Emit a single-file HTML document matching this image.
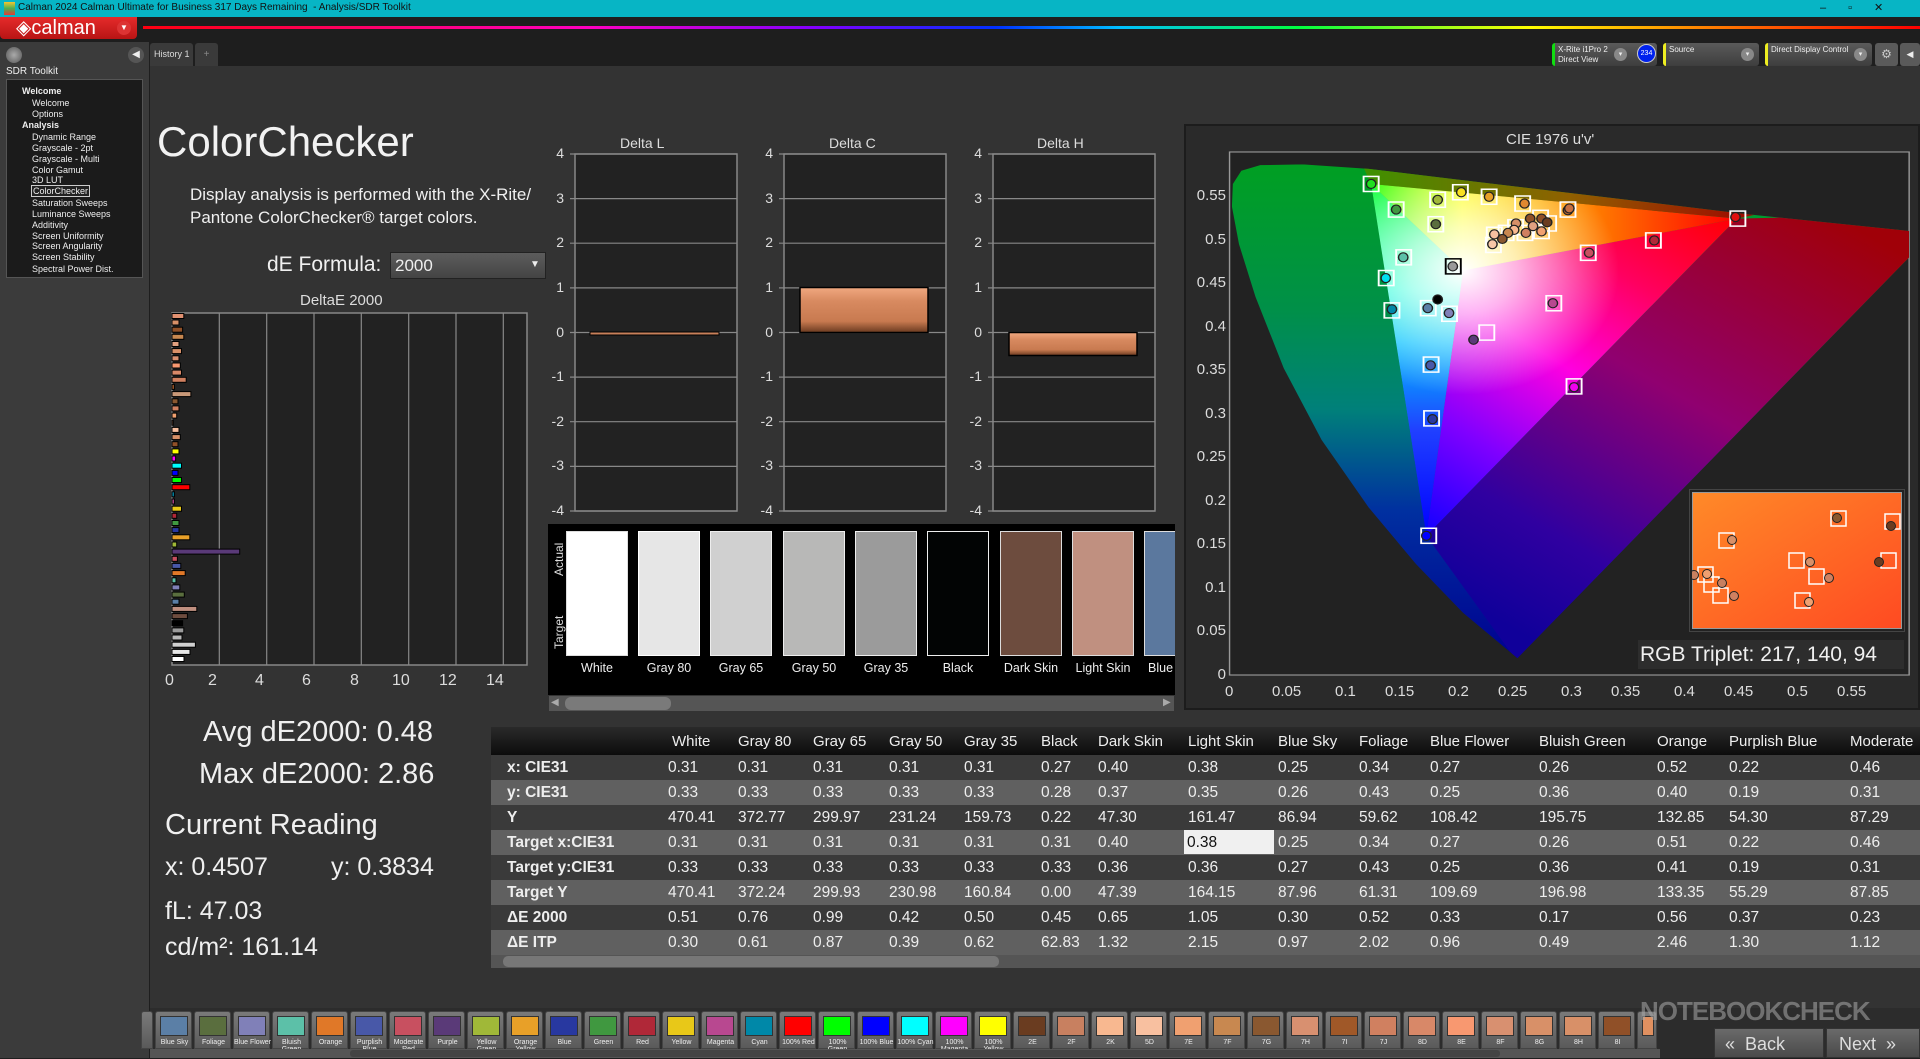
<!DOCTYPE html>
<html><head><meta charset="utf-8">
<style>
*{margin:0;padding:0;box-sizing:border-box}
body{width:1920px;height:1058px;background:#1e1e1e;font-family:"Liberation Sans",sans-serif;color:#eee;position:relative;overflow:hidden}
.a{position:absolute;white-space:nowrap}
.tree div{position:absolute;font-size:9px;color:#eee;white-space:nowrap}
.tk{position:absolute;font-size:14px;color:#ddd;text-align:right;width:24px}
.row{position:absolute;left:491px;width:1429px;height:25px;font-size:15.5px;line-height:25px;color:#eee}
.row span{position:absolute;top:0;white-space:nowrap}
.row b{position:absolute;left:16px;font-weight:bold}
.tab{position:absolute;top:1011px;width:37px;height:38px;background:linear-gradient(#7a7a7a,#5a5a5a);border:1px solid #444;border-radius:3px 3px 0 0}
.tab i{position:absolute;left:4px;top:4px;width:28px;height:20px;border:1px solid #333}
.tab em{position:absolute;left:0;top:27px;width:37px;font-size:7px;line-height:7px;text-align:center;color:#eee;font-style:normal}
</style></head><body>
<div class="a" style="left:0;top:0;width:1920px;height:17px;background:#07b5c5"></div>
<div class="a" style="left:4px;top:2px;width:11px;height:13px;background:linear-gradient(#f4c430,#4caf50 50%,#e53935)"></div>
<div class="a" style="left:18px;top:2px;font-size:10px;color:#111">Calman 2024 Calman Ultimate for Business 317 Days Remaining &nbsp;- Analysis/SDR Toolkit</div>
<div class="a" style="left:1820px;top:1px;font-size:11px;color:#111;letter-spacing:22px">–▫✕</div>
<div class="a" style="left:0;top:17px;width:137px;height:22px;background:linear-gradient(#e52b2b,#b81414);border-radius:0 0 4px 4px"></div>
<div class="a" style="left:16px;top:17px;font-size:20px;color:#fff;line-height:22px">◈calman</div>
<div class="a" style="left:117px;top:21px;width:14px;height:14px;border-radius:7px;background:#d33;font-size:8px;color:#fff;text-align:center;line-height:14px">▼</div>
<div class="a" style="left:143px;top:26px;width:1777px;height:3px;background:linear-gradient(90deg,#ff0010,#ff00c0 25%,#8000ff 38%,#0030ff 48%,#00c0ff 55%,#00ff40 65%,#ffff00 78%,#ff8000 88%,#ff0000)"></div>
<div class="a" style="left:0;top:42px;width:149px;height:1016px;background:#3b3b3b"></div>
<div class="a" style="left:6px;top:47px;width:16px;height:16px;border-radius:8px;background:radial-gradient(#aaa,#555)"></div>
<div class="a" style="left:128px;top:47px;width:16px;height:16px;border-radius:8px;background:#555;font-size:10px;text-align:center;line-height:16px">◀</div>
<div class="a" style="left:6px;top:66px;font-size:10px;color:#eee">SDR Toolkit</div>
<div class="a tree" style="left:6px;top:79px;width:137px;height:199px;background:#1b1b1b;border:1px solid #555">
<div style="left:15px;top:6px;font-weight:bold">Welcome</div>
<div style="left:25px;top:18px">Welcome</div>
<div style="left:25px;top:29px">Options</div>
<div style="left:15px;top:40px;font-weight:bold">Analysis</div>
<div style="left:25px;top:52px">Dynamic Range</div>
<div style="left:25px;top:63px">Grayscale - 2pt</div>
<div style="left:25px;top:74px">Grayscale - Multi</div>
<div style="left:25px;top:85px">Color Gamut</div>
<div style="left:25px;top:95px">3D LUT</div>
<div style="left:24px;top:105px;border:1px solid #ccc;background:#222;padding:0 1px">ColorChecker</div>
<div style="left:25px;top:118px">Saturation Sweeps</div>
<div style="left:25px;top:129px">Luminance Sweeps</div>
<div style="left:25px;top:140px">Additivity</div>
<div style="left:25px;top:151px">Screen Uniformity</div>
<div style="left:25px;top:161px">Screen Angularity</div>
<div style="left:25px;top:172px">Screen Stability</div>
<div style="left:25px;top:184px">Spectral Power Dist.</div>
</div>
<div class="a" style="left:150px;top:43px;width:43px;height:23px;background:#3a3a3a;border-radius:3px 3px 0 0;font-size:9px;line-height:23px;padding-left:4px;color:#ddd">History 1</div>
<div class="a" style="left:195px;top:43px;width:23px;height:23px;background:#3a3a3a;border-radius:3px 3px 0 0;font-size:10px;line-height:23px;text-align:center;color:#888">+</div>
<div class="a" style="left:1552px;top:43px;width:105px;height:23px;background:linear-gradient(#5a5a5a,#3e3e3e);border-left:3px solid #1d1;border-radius:3px;font-size:8px;line-height:10px;padding:2px 3px;color:#eee">X-Rite i1Pro 2<br>Direct View</div>
<div class="a" style="left:1614px;top:48px;width:13px;height:13px;border-radius:7px;background:#888;font-size:7px;text-align:center;line-height:13px;color:#eee">▾</div>
<div class="a" style="left:1637px;top:44px;width:19px;height:19px;border-radius:10px;background:#0022ee;border:1px solid #ccc;font-size:7px;text-align:center;line-height:17px;color:#fff">234</div>
<div class="a" style="left:1663px;top:43px;width:96px;height:23px;background:linear-gradient(#5a5a5a,#3e3e3e);border-left:3px solid #ee2;border-radius:3px;font-size:8px;padding:2px 3px;color:#eee">Source</div>
<div class="a" style="left:1741px;top:48px;width:13px;height:13px;border-radius:7px;background:#888;font-size:7px;text-align:center;line-height:13px">▾</div>
<div class="a" style="left:1765px;top:43px;width:107px;height:23px;background:linear-gradient(#5a5a5a,#3e3e3e);border-left:3px solid #ee2;border-radius:3px;font-size:8px;padding:2px 3px;color:#eee">Direct Display Control</div>
<div class="a" style="left:1854px;top:48px;width:13px;height:13px;border-radius:7px;background:#888;font-size:7px;text-align:center;line-height:13px">▾</div>
<div class="a" style="left:1875px;top:43px;width:23px;height:23px;background:#5a5a5a;border-radius:3px;font-size:12px;text-align:center;line-height:23px;color:#ccc">⚙</div>
<div class="a" style="left:1900px;top:43px;width:20px;height:23px;background:#5a5a5a;border-radius:3px;font-size:9px;text-align:center;line-height:23px">◀</div>
<div class="a" style="left:150px;top:66px;width:1770px;height:992px;background:#333"></div>
<div class="a" style="left:157px;top:118px;font-size:42px;color:#f2f2f2">ColorChecker</div>
<div class="a" style="left:190px;top:183px;font-size:17px;line-height:23px;color:#f0f0f0">Display analysis is performed with the X-Rite/<br>Pantone ColorChecker® target colors.</div>
<div class="a" style="left:267px;top:253px;font-size:21px;color:#f0f0f0">dE Formula:</div>
<div class="a" style="left:390px;top:252px;width:156px;height:27px;background:linear-gradient(#5c5c5c,#444);border:1px solid #222;font-size:17px;line-height:25px;padding-left:4px;color:#eee">2000</div>
<div class="a" style="left:530px;top:259px;font-size:10px;color:#eee">▼</div>
<div class="a" style="left:300px;top:292px;font-size:15px;color:#ddd">DeltaE 2000</div>
<svg class="a" style="left:150px;top:290px" width="400" height="410">
<rect x="22" y="23" width="355" height="352" fill="#222" stroke="#888" stroke-width="1.5"/>
<g stroke="#888" stroke-width="1.2"><line x1="69.3" y1="23" x2="69.3" y2="375"/><line x1="116.7" y1="23" x2="116.7" y2="375"/><line x1="164" y1="23" x2="164" y2="375"/><line x1="211.3" y1="23" x2="211.3" y2="375"/><line x1="258.7" y1="23" x2="258.7" y2="375"/><line x1="306" y1="23" x2="306" y2="375"/><line x1="353.3" y1="23" x2="353.3" y2="375"/></g>
<g stroke="#000" stroke-width="1">
<rect x="22" y="366.5" width="12" height="5" fill="#fff"/>
<rect x="22" y="359.4" width="18" height="5" fill="#e6e6e6"/>
<rect x="22" y="352.2" width="23.4" height="5" fill="#d0d0d0"/>
<rect x="22" y="345" width="10" height="5" fill="#b8b8b8"/>
<rect x="22" y="337.9" width="11.8" height="5" fill="#9b9b9b"/>
<rect x="22" y="330.7" width="10.6" height="5" fill="#000"/>
<rect x="22" y="323.6" width="15.4" height="5" fill="#6d4c3e"/>
<rect x="22" y="316.4" width="24.8" height="5" fill="#c09080"/>
<rect x="22" y="309.2" width="7" height="5" fill="#5b7fa6"/>
<rect x="22" y="302.1" width="12.3" height="5" fill="#5a6e3e"/>
<rect x="22" y="294.9" width="7.8" height="5" fill="#8080b8"/>
<rect x="22" y="287.8" width="4" height="5" fill="#5cc0a8"/>
<rect x="22" y="280.6" width="13.2" height="5" fill="#e07828"/>
<rect x="22" y="273.4" width="8.8" height="5" fill="#4858a8"/>
<rect x="22" y="266.3" width="5.4" height="5" fill="#c85060"/>
<rect x="22" y="259.1" width="67.7" height="5" fill="#5a3a78"/>
<rect x="22" y="252" width="4.7" height="5" fill="#a0b838"/>
<rect x="22" y="244.8" width="17.8" height="5" fill="#e8a028"/>
<rect x="22" y="237.6" width="7" height="5" fill="#2838a0"/>
<rect x="22" y="230.5" width="7" height="5" fill="#409840"/>
<rect x="22" y="223.3" width="4.7" height="5" fill="#b02838"/>
<rect x="22" y="216.2" width="9.5" height="5" fill="#e8c818"/>
<rect x="22" y="209" width="2.4" height="5" fill="#b84890"/>
<rect x="22" y="201.8" width="2.4" height="5" fill="#0088a8"/>
<rect x="22" y="194.7" width="17.8" height="5" fill="#f00"/>
<rect x="22" y="187.5" width="9.5" height="5" fill="#0f0"/>
<rect x="22" y="180.4" width="6" height="5" fill="#00f"/>
<rect x="22" y="173.2" width="9.5" height="5" fill="#0ff"/>
<rect x="22" y="166" width="3.6" height="5" fill="#f0f"/>
<rect x="22" y="158.9" width="7" height="5" fill="#ff0"/>
<rect x="22" y="151.7" width="6" height="5" fill="#905028"/>
<rect x="22" y="144.6" width="8.3" height="5" fill="#d89068"/>
<rect x="22" y="137.4" width="7" height="5" fill="#f8c0a0"/>
<rect x="22" y="130.2" width="1.2" height="5" fill="#d89068"/>
<rect x="22" y="123.1" width="4.7" height="5" fill="#f0a070"/>
<rect x="22" y="115.9" width="7" height="5" fill="#d08060"/>
<rect x="22" y="108.8" width="6" height="5" fill="#8a5830"/>
<rect x="22" y="101.6" width="18.9" height="5" fill="#c89878"/>
<rect x="22" y="94.4" width="2.4" height="5" fill="#a05828"/>
<rect x="22" y="87.3" width="14.2" height="5" fill="#d08060"/>
<rect x="22" y="80.1" width="9.5" height="5" fill="#d88868"/>
<rect x="22" y="73" width="8.3" height="5" fill="#f89870"/>
<rect x="22" y="65.8" width="7" height="5" fill="#d89070"/>
<rect x="22" y="58.6" width="9.5" height="5" fill="#d89068"/>
<rect x="22" y="51.5" width="7" height="5" fill="#e0a080"/>
<rect x="22" y="44.3" width="11.8" height="5" fill="#c88850"/>
<rect x="22" y="37.2" width="10.6" height="5" fill="#905028"/>
<rect x="22" y="30" width="7" height="5" fill="#d89068"/>
<rect x="22" y="23.5" width="11.8" height="5" fill="#e09070"/>
</g>
</svg>
<div class="a" style="left:165px;top:672px;width:380px;font-size:16px;color:#ddd">
<span class="a" style="left:0">0</span><span class="a" style="left:43px">2</span><span class="a" style="left:90px">4</span><span class="a" style="left:137px">6</span><span class="a" style="left:185px">8</span><span class="a" style="left:227px">10</span><span class="a" style="left:274px">12</span><span class="a" style="left:321px">14</span></div>
<div class="a" style="left:203px;top:716px;font-size:29px;color:#f0f0f0">Avg dE2000: 0.48</div>
<div class="a" style="left:199px;top:758px;font-size:29px;color:#f0f0f0">Max dE2000: 2.86</div>
<div class="a" style="left:165px;top:809px;font-size:29px;color:#f0f0f0">Current Reading</div>
<div class="a" style="left:165px;top:853px;font-size:25px;color:#f0f0f0">x: 0.4507</div>
<div class="a" style="left:331px;top:853px;font-size:25px;color:#f0f0f0">y: 0.3834</div>
<div class="a" style="left:165px;top:897px;font-size:25px;color:#f0f0f0">fL: 47.03</div>
<div class="a" style="left:165px;top:933px;font-size:25px;color:#f0f0f0">cd/m²: 161.14</div>
<svg class="a" style="left:540px;top:130px" width="640" height="400">
<g fill="#222" stroke="#888" stroke-width="1.5"><rect x="35" y="24" width="162" height="357"/><rect x="244" y="24" width="162" height="357"/><rect x="453" y="24" width="162" height="357"/></g>
<g stroke="#888" stroke-width="1.2">
<path d="M30 24H197M30 68.6H197M30 113.2H197M30 157.9H197M30 202.5H197M30 247.1H197M30 291.7H197M30 336.4H197M30 381H197"/>
<path d="M239 24H406M239 68.6H406M239 113.2H406M239 157.9H406M239 202.5H406M239 247.1H406M239 291.7H406M239 336.4H406M239 381H406"/>
<path d="M448 24H615M448 68.6H615M448 113.2H615M448 157.9H615M448 202.5H615M448 247.1H615M448 291.7H615M448 336.4H615M448 381H615"/>
</g>
<defs><linearGradient id="bar" x1="0" y1="0" x2="0" y2="1"><stop offset="0" stop-color="#f0a880"/><stop offset=".3" stop-color="#d88a60"/><stop offset=".75" stop-color="#c87a50"/><stop offset="1" stop-color="#6a3a20"/></linearGradient></defs>
<rect x="50" y="202" width="129" height="3" fill="#c8805a" stroke="#000"/>
<rect x="260" y="157.5" width="128" height="45" fill="url(#bar)" stroke="#000" stroke-width="1.5"/>
<rect x="469" y="202.5" width="128" height="23" fill="url(#bar)" stroke="#000" stroke-width="1.5"/>
</svg>
<div class="a" style="left:620px;top:135px;font-size:14px;color:#ddd">Delta L</div>
<div class="a" style="left:829px;top:135px;font-size:14px;color:#ddd">Delta C</div>
<div class="a" style="left:1037px;top:135px;font-size:14px;color:#ddd">Delta H</div>
<div class="a" style="left:540px;top:145px;width:30px;height:400px;font-size:14px;color:#ddd">
<div class="tk" style="top:0">4</div><div class="tk" style="top:44.6px">3</div><div class="tk" style="top:89.2px">2</div><div class="tk" style="top:133.9px">1</div><div class="tk" style="top:178.5px">0</div><div class="tk" style="top:223px">-1</div><div class="tk" style="top:267.7px">-2</div><div class="tk" style="top:312.4px">-3</div><div class="tk" style="top:357px">-4</div></div>
<div class="a" style="left:749px;top:145px;width:30px;height:400px">
<div class="tk" style="top:0">4</div><div class="tk" style="top:44.6px">3</div><div class="tk" style="top:89.2px">2</div><div class="tk" style="top:133.9px">1</div><div class="tk" style="top:178.5px">0</div><div class="tk" style="top:223px">-1</div><div class="tk" style="top:267.7px">-2</div><div class="tk" style="top:312.4px">-3</div><div class="tk" style="top:357px">-4</div></div>
<div class="a" style="left:958px;top:145px;width:30px;height:400px">
<div class="tk" style="top:0">4</div><div class="tk" style="top:44.6px">3</div><div class="tk" style="top:89.2px">2</div><div class="tk" style="top:133.9px">1</div><div class="tk" style="top:178.5px">0</div><div class="tk" style="top:223px">-1</div><div class="tk" style="top:267.7px">-2</div><div class="tk" style="top:312.4px">-3</div><div class="tk" style="top:357px">-4</div></div>
<div class="a" style="left:548px;top:524px;width:627px;height:188px;background:#000;overflow:hidden">
<div class="a" style="font-size:12px;color:#ddd;transform:rotate(-90deg);transform-origin:left top;top:52px;left:4px">Actual</div>
<div class="a" style="left:4px;top:125px;font-size:12px;color:#ddd;transform:rotate(-90deg);transform-origin:left top">Target</div>
<div class="a" style="left:18px;top:7px;width:62px;height:125px;background:#fff;border:1px solid #ddd"></div>
<div class="a" style="left:90px;top:7px;width:62px;height:125px;background:#e6e6e6;border:1px solid #fff"></div>
<div class="a" style="left:162px;top:7px;width:62px;height:125px;background:#d0d0d0;border:1px solid #eee"></div>
<div class="a" style="left:235px;top:7px;width:62px;height:125px;background:#b8b8b7;border:1px solid #eee"></div>
<div class="a" style="left:307px;top:7px;width:62px;height:125px;background:#9b9b9b;border:1px solid #eee"></div>
<div class="a" style="left:379px;top:7px;width:62px;height:125px;background:#020404;border:1px solid #eee"></div>
<div class="a" style="left:452px;top:7px;width:62px;height:125px;background:#6d4c3e;border:1px solid #ddd"></div>
<div class="a" style="left:524px;top:7px;width:62px;height:125px;background:#c09080;border:1px solid #ddd"></div>
<div class="a" style="left:596px;top:7px;width:62px;height:125px;background:#5b789e;border:1px solid #ddd"></div>
<div class="a" style="left:18px;top:137px;width:62px;text-align:center;font-size:12.5px;color:#eee">White</div>
<div class="a" style="left:90px;top:137px;width:62px;text-align:center;font-size:12.5px;color:#eee">Gray 80</div>
<div class="a" style="left:162px;top:137px;width:62px;text-align:center;font-size:12.5px;color:#eee">Gray 65</div>
<div class="a" style="left:235px;top:137px;width:62px;text-align:center;font-size:12.5px;color:#eee">Gray 50</div>
<div class="a" style="left:307px;top:137px;width:62px;text-align:center;font-size:12.5px;color:#eee">Gray 35</div>
<div class="a" style="left:379px;top:137px;width:62px;text-align:center;font-size:12.5px;color:#eee">Black</div>
<div class="a" style="left:452px;top:137px;width:62px;text-align:center;font-size:12.5px;color:#eee">Dark Skin</div>
<div class="a" style="left:524px;top:137px;width:62px;text-align:center;font-size:12.5px;color:#eee">Light Skin</div>
<div class="a" style="left:600px;top:137px;font-size:12.5px;color:#eee">Blue Sky</div>
</div>
<div class="a" style="left:548px;top:695px;width:627px;height:17px;background:#555;border:1px solid #333"></div>
<div class="a" style="left:565px;top:697px;width:106px;height:13px;background:#7a7a7a;border-radius:6px"></div>
<div class="a" style="left:551px;top:697px;font-size:10px;color:#aaa">◀</div>
<div class="a" style="left:1163px;top:697px;font-size:10px;color:#aaa">▶</div>
<div class="a" style="left:1184px;top:124px;width:736px;height:586px;background:#2a2a2a;border:2px solid #1c1c1c"></div>
<div class="a" style="left:1506px;top:131px;font-size:15px;color:#ddd">CIE 1976 u'v'</div>
<svg class="a" style="left:1180px;top:120px" width="740" height="590" viewBox="0 0 1568 1568" preserveAspectRatio="none">
<defs>
<clipPath id="loc"><polygon points="715,1430 600,1310 500,1180 400,1030 300,850 220,660 160,470 125,330 110,230 112,170 130,135 170,120 260,118 400,130 600,160 900,205 1200,250 1545,295 1545,365"/></clipPath>
<linearGradient id="gl" x1="0" y1="0" x2="0" y2="1"><stop offset="0" stop-color="#00a020"/><stop offset=".3" stop-color="#009048"/><stop offset=".5" stop-color="#00807a"/><stop offset=".7" stop-color="#0030a0"/><stop offset="1" stop-color="#000090"/></linearGradient>
<linearGradient id="gr" gradientUnits="userSpaceOnUse" x1="1450" y1="300" x2="700" y2="1350"><stop offset="0" stop-color="#a00008"/><stop offset=".45" stop-color="#900070"/><stop offset=".8" stop-color="#3000a0"/><stop offset="1" stop-color="#10009a"/></linearGradient>
<linearGradient id="gt" gradientUnits="userSpaceOnUse" x1="400" y1="0" x2="1250" y2="0"><stop offset="0" stop-color="#409000"/><stop offset=".5" stop-color="#906000"/><stop offset="1" stop-color="#a00000"/></linearGradient>
<linearGradient id="s1" gradientUnits="userSpaceOnUse" x1="0" y1="170" x2="0" y2="1105"><stop offset="0" stop-color="#00ff20"/><stop offset=".3" stop-color="#00ffd0"/><stop offset=".45" stop-color="#00c0ff"/><stop offset=".7" stop-color="#2040ff"/><stop offset="1" stop-color="#0000ff"/></linearGradient>
<linearGradient id="s2" gradientUnits="userSpaceOnUse" x1="522" y1="1105" x2="1180" y2="262"><stop offset="0" stop-color="#1000ff"/><stop offset=".25" stop-color="#8000ff"/><stop offset=".5" stop-color="#ff00e0"/><stop offset=".75" stop-color="#ff0060"/><stop offset="1" stop-color="#ff0000"/></linearGradient>
<linearGradient id="s3" gradientUnits="userSpaceOnUse" x1="405" y1="0" x2="1180" y2="0"><stop offset="0" stop-color="#20ff00"/><stop offset=".25" stop-color="#ffff00"/><stop offset=".5" stop-color="#ffa000"/><stop offset="1" stop-color="#ff0000"/></linearGradient>
<radialGradient id="wh" gradientUnits="userSpaceOnUse" cx="600" cy="400" r="330"><stop offset="0" stop-color="#fff" stop-opacity="1"/><stop offset=".35" stop-color="#fff" stop-opacity=".7"/><stop offset="1" stop-color="#fff" stop-opacity="0"/></radialGradient>
<clipPath id="tri"><polygon points="1180,262 405,170 522,1105"/></clipPath>
</defs>
<rect x="105" y="85" width="1440" height="1390" fill="#222" stroke="#999" stroke-width="3"/>
<g clip-path="url(#loc)">
<rect x="100" y="100" width="1460" height="1340" fill="url(#gl)"/>
<polygon points="1180,262 1600,250 1600,400 715,1440 522,1105" fill="url(#gr)"/>
<polygon points="380,100 1300,230 1180,262 405,172" fill="url(#gt)"/>
</g>
<g clip-path="url(#tri)">
<polygon points="600,400 405,170 522,1105" fill="url(#s1)"/>
<polygon points="600,400 522,1105 1180,262" fill="url(#s2)"/>
<polygon points="600,400 1180,262 405,170" fill="url(#s3)"/>
<rect x="300" y="100" width="1000" height="1100" fill="url(#wh)"/>
</g>
<g stroke="#fff" stroke-width="4" fill="none">
<rect x="389" y="150" width="32" height="40"/><rect x="442" y="218" width="32" height="40"/><rect x="530" y="192" width="32" height="40"/>
<rect x="526" y="257" width="32" height="40"/><rect x="578" y="172" width="32" height="40"/><rect x="639" y="184" width="32" height="40"/>
<rect x="710" y="202" width="32" height="40"/><rect x="806" y="218" width="32" height="40"/><rect x="1166" y="242" width="32" height="40"/>
<rect x="987" y="300" width="32" height="40"/><rect x="849" y="333" width="32" height="40"/><rect x="458" y="345" width="32" height="40"/>
<rect x="421" y="400" width="32" height="40"/><rect x="433" y="486" width="32" height="40"/><rect x="510" y="480" width="32" height="40"/>
<rect x="555" y="495" width="32" height="40"/><rect x="776" y="467" width="32" height="40"/><rect x="634" y="545" width="32" height="40"/>
<rect x="516" y="630" width="32" height="40"/><rect x="517" y="773" width="32" height="40"/><rect x="819" y="688" width="32" height="40"/>
<rect x="511" y="1085" width="32" height="40"/><rect x="748" y="240" width="32" height="40"/><rect x="765" y="255" width="32" height="40"/>
<rect x="650" y="285" width="32" height="40"/><rect x="648" y="312" width="32" height="40"/><rect x="675" y="280" width="32" height="40"/>
<rect x="695" y="265" width="32" height="40"/><rect x="715" y="280" width="32" height="40"/><rect x="750" y="275" width="32" height="40"/>
</g>
<rect x="563" y="369" width="32" height="40" fill="none" stroke="#000" stroke-width="4"/>
<g stroke="#222" stroke-width="3">
<ellipse cx="405" cy="170" rx="10" ry="12" fill="#20e020"/><ellipse cx="458" cy="238" rx="10" ry="12" fill="#409840"/><ellipse cx="546" cy="212" rx="10" ry="12" fill="#a0b838"/>
<ellipse cx="542" cy="277" rx="10" ry="12" fill="#5a6e3e"/><ellipse cx="596" cy="192" rx="10" ry="12" fill="#f8e020"/><ellipse cx="655" cy="204" rx="10" ry="12" fill="#e8a028"/>
<ellipse cx="730" cy="222" rx="10" ry="12" fill="#e08830"/><ellipse cx="822" cy="240" rx="10" ry="12" fill="#b06030"/><ellipse cx="1177" cy="258" rx="10" ry="12" fill="#e01010"/>
<ellipse cx="1005" cy="320" rx="10" ry="12" fill="#b02838"/><ellipse cx="867" cy="353" rx="10" ry="12" fill="#c85060"/><ellipse cx="473" cy="365" rx="10" ry="12" fill="#5cc0a8"/>
<ellipse cx="436" cy="420" rx="10" ry="12" fill="#00e0f0"/><ellipse cx="449" cy="503" rx="10" ry="12" fill="#0088a8"/><ellipse cx="525" cy="500" rx="10" ry="12" fill="#5b7fa6"/>
<ellipse cx="570" cy="513" rx="10" ry="12" fill="#8080b8"/><ellipse cx="578" cy="389" rx="10" ry="12" fill="#999"/><ellipse cx="790" cy="487" rx="10" ry="12" fill="#b84890"/>
<ellipse cx="622" cy="584" rx="10" ry="12" fill="#5a3a78"/><ellipse cx="546" cy="477" rx="10" ry="12" fill="#000"/><ellipse cx="531" cy="652" rx="10" ry="12" fill="#4858a8"/>
<ellipse cx="535" cy="795" rx="10" ry="12" fill="#2838a0"/><ellipse cx="835" cy="710" rx="10" ry="12" fill="#f000f0"/><ellipse cx="522" cy="1105" rx="10" ry="12" fill="#0000ff"/>
<ellipse cx="742" cy="262" rx="10" ry="12" fill="#905028"/><ellipse cx="766" cy="262" rx="10" ry="12" fill="#905028"/><ellipse cx="778" cy="272" rx="10" ry="12" fill="#6a3c20"/>
<ellipse cx="712" cy="275" rx="10" ry="12" fill="#d89068"/><ellipse cx="748" cy="282" rx="10" ry="12" fill="#e0a080"/><ellipse cx="766" cy="296" rx="10" ry="12" fill="#f0a070"/>
<ellipse cx="733" cy="300" rx="10" ry="12" fill="#d08060"/><ellipse cx="708" cy="292" rx="10" ry="12" fill="#f8b890"/><ellipse cx="695" cy="300" rx="10" ry="12" fill="#c88850"/>
<ellipse cx="683" cy="316" rx="10" ry="12" fill="#8a5830"/><ellipse cx="666" cy="304" rx="10" ry="12" fill="#f8c0a0"/><ellipse cx="662" cy="330" rx="10" ry="12" fill="#f8c8a8"/>
<ellipse cx="825" cy="235" rx="10" ry="12" fill="#c87040"/>
</g>
</svg>
<div class="a" style="left:1186px;top:0;width:40px;font-size:15px;color:#ddd;text-align:right">
<div class="a" style="right:0;top:666px">0</div><div class="a" style="right:0;top:622px">0.05</div><div class="a" style="right:0;top:579px">0.1</div><div class="a" style="right:0;top:535px">0.15</div><div class="a" style="right:0;top:492px">0.2</div><div class="a" style="right:0;top:448px">0.25</div><div class="a" style="right:0;top:405px">0.3</div><div class="a" style="right:0;top:361px">0.35</div><div class="a" style="right:0;top:318px">0.4</div><div class="a" style="right:0;top:274px">0.45</div><div class="a" style="right:0;top:231px">0.5</div><div class="a" style="right:0;top:187px">0.55</div></div>
<div class="a" style="left:0;top:683px;font-size:15px;color:#ddd">
<span class="a" style="left:1225px">0</span><span class="a" style="left:1272px">0.05</span><span class="a" style="left:1335px">0.1</span><span class="a" style="left:1385px">0.15</span><span class="a" style="left:1448px">0.2</span><span class="a" style="left:1498px">0.25</span><span class="a" style="left:1561px">0.3</span><span class="a" style="left:1611px">0.35</span><span class="a" style="left:1674px">0.4</span><span class="a" style="left:1724px">0.45</span><span class="a" style="left:1787px">0.5</span><span class="a" style="left:1837px">0.55</span></div>
<div class="a" style="left:1689px;top:489px;width:216px;height:143px;background:#222;border:1px solid #444"></div>
<svg class="a" style="left:1692px;top:492px" width="210" height="137">
<defs><linearGradient id="io" x1="0" y1="0" x2="1" y2="1"><stop offset="0" stop-color="#ff8a28"/><stop offset="1" stop-color="#ff4a22"/></linearGradient></defs>
<rect width="210" height="137" fill="url(#io)" stroke="#999" stroke-width="2"/>
<g fill="none" stroke="#fff" stroke-width="1.5"><rect x="27" y="41" width="15" height="15"/><rect x="139" y="19" width="15" height="15"/><rect x="193" y="22" width="15" height="15"/><rect x="6" y="75" width="15" height="15"/><rect x="12" y="85" width="15" height="15"/><rect x="21" y="96" width="15" height="15"/><rect x="97" y="61" width="15" height="15"/><rect x="117" y="77" width="15" height="15"/><rect x="103" y="101" width="15" height="15"/><rect x="189" y="61" width="15" height="15"/></g>
<g stroke="#222" stroke-width="1"><circle cx="40" cy="48" r="4.5" fill="#d89068"/><circle cx="145" cy="26" r="4.5" fill="#8a5830"/><circle cx="199" cy="34" r="4.5" fill="#6a3c20"/><circle cx="15" cy="82" r="4.5" fill="#f0a070"/><circle cx="30" cy="91" r="4.5" fill="#c88060"/><circle cx="42" cy="104" r="4.5" fill="#d08060"/><circle cx="118" cy="70" r="4.5" fill="#d89068"/><circle cx="137" cy="86" r="4.5" fill="#d08060"/><circle cx="117" cy="110" r="4.5" fill="#f0a070"/><circle cx="187" cy="70" r="4.5" fill="#6a3c20"/><circle cx="2" cy="83" r="4.5" fill="#c88060"/></g>
</svg>
<div class="a" style="left:1638px;top:640px;width:266px;height:29px;background:#2d2d2d;font-size:21px;line-height:29px;color:#f0f0f0;padding-left:2px">RGB Triplet: 217, 140, 94</div>
<div class="a" style="left:491px;top:727px;width:1429px;height:28px;background:linear-gradient(#2a2a2a,#0c0c0c)"></div>
<div class="row" style="top:729px;height:25px;font-size:15px">
<span style="left:181px">White</span><span style="left:247px">Gray 80</span><span style="left:322px">Gray 65</span><span style="left:398px">Gray 50</span><span style="left:473px">Gray 35</span><span style="left:550px">Black</span><span style="left:607px">Dark Skin</span><span style="left:697px">Light Skin</span><span style="left:787px">Blue Sky</span><span style="left:868px">Foliage</span><span style="left:939px">Blue Flower</span><span style="left:1048px">Bluish Green</span><span style="left:1166px">Orange</span><span style="left:1238px">Purplish Blue</span><span style="left:1359px">Moderate</span></div>
<div class="row" style="top:755px;background:#3a3a3a"><b>x: CIE31</b><span style="left:177px">0.31</span><span style="left:247px">0.31</span><span style="left:322px">0.31</span><span style="left:398px">0.31</span><span style="left:473px">0.31</span><span style="left:550px">0.27</span><span style="left:607px">0.40</span><span style="left:697px">0.38</span><span style="left:787px">0.25</span><span style="left:868px">0.34</span><span style="left:939px">0.27</span><span style="left:1048px">0.26</span><span style="left:1166px">0.52</span><span style="left:1238px">0.22</span><span style="left:1359px">0.46</span></div>
<div class="row" style="top:780px;background:#606060"><b>y: CIE31</b><span style="left:177px">0.33</span><span style="left:247px">0.33</span><span style="left:322px">0.33</span><span style="left:398px">0.33</span><span style="left:473px">0.33</span><span style="left:550px">0.28</span><span style="left:607px">0.37</span><span style="left:697px">0.35</span><span style="left:787px">0.26</span><span style="left:868px">0.43</span><span style="left:939px">0.25</span><span style="left:1048px">0.36</span><span style="left:1166px">0.40</span><span style="left:1238px">0.19</span><span style="left:1359px">0.31</span></div>
<div class="row" style="top:805px;background:#3a3a3a"><b>Y</b><span style="left:177px">470.41</span><span style="left:247px">372.77</span><span style="left:322px">299.97</span><span style="left:398px">231.24</span><span style="left:473px">159.73</span><span style="left:550px">0.22</span><span style="left:607px">47.30</span><span style="left:697px">161.47</span><span style="left:787px">86.94</span><span style="left:868px">59.62</span><span style="left:939px">108.42</span><span style="left:1048px">195.75</span><span style="left:1166px">132.85</span><span style="left:1238px">54.30</span><span style="left:1359px">87.29</span></div>
<div class="row" style="top:830px;background:#606060"><b>Target x:CIE31</b><span style="left:177px">0.31</span><span style="left:247px">0.31</span><span style="left:322px">0.31</span><span style="left:398px">0.31</span><span style="left:473px">0.31</span><span style="left:550px">0.31</span><span style="left:607px">0.40</span><span style="left:693px;width:90px;height:24px;background:#f0f0f0;color:#111;padding-left:3px;top:0">0.38</span><span style="left:787px">0.25</span><span style="left:868px">0.34</span><span style="left:939px">0.27</span><span style="left:1048px">0.26</span><span style="left:1166px">0.51</span><span style="left:1238px">0.22</span><span style="left:1359px">0.46</span></div>
<div class="row" style="top:855px;background:#3a3a3a"><b>Target y:CIE31</b><span style="left:177px">0.33</span><span style="left:247px">0.33</span><span style="left:322px">0.33</span><span style="left:398px">0.33</span><span style="left:473px">0.33</span><span style="left:550px">0.33</span><span style="left:607px">0.36</span><span style="left:697px">0.36</span><span style="left:787px">0.27</span><span style="left:868px">0.43</span><span style="left:939px">0.25</span><span style="left:1048px">0.36</span><span style="left:1166px">0.41</span><span style="left:1238px">0.19</span><span style="left:1359px">0.31</span></div>
<div class="row" style="top:880px;background:#606060"><b>Target Y</b><span style="left:177px">470.41</span><span style="left:247px">372.24</span><span style="left:322px">299.93</span><span style="left:398px">230.98</span><span style="left:473px">160.84</span><span style="left:550px">0.00</span><span style="left:607px">47.39</span><span style="left:697px">164.15</span><span style="left:787px">87.96</span><span style="left:868px">61.31</span><span style="left:939px">109.69</span><span style="left:1048px">196.98</span><span style="left:1166px">133.35</span><span style="left:1238px">55.29</span><span style="left:1359px">87.85</span></div>
<div class="row" style="top:905px;background:#3a3a3a"><b>ΔE 2000</b><span style="left:177px">0.51</span><span style="left:247px">0.76</span><span style="left:322px">0.99</span><span style="left:398px">0.42</span><span style="left:473px">0.50</span><span style="left:550px">0.45</span><span style="left:607px">0.65</span><span style="left:697px">1.05</span><span style="left:787px">0.30</span><span style="left:868px">0.52</span><span style="left:939px">0.33</span><span style="left:1048px">0.17</span><span style="left:1166px">0.56</span><span style="left:1238px">0.37</span><span style="left:1359px">0.23</span></div>
<div class="row" style="top:930px;background:#606060"><b>ΔE ITP</b><span style="left:177px">0.30</span><span style="left:247px">0.61</span><span style="left:322px">0.87</span><span style="left:398px">0.39</span><span style="left:473px">0.62</span><span style="left:550px">62.83</span><span style="left:607px">1.32</span><span style="left:697px">2.15</span><span style="left:787px">0.97</span><span style="left:868px">2.02</span><span style="left:939px">0.96</span><span style="left:1048px">0.49</span><span style="left:1166px">2.46</span><span style="left:1238px">1.30</span><span style="left:1359px">1.12</span></div>
<div class="a" style="left:491px;top:955px;width:1429px;height:13px;background:#555"></div>
<div class="a" style="left:503px;top:956px;width:496px;height:11px;background:#777;border-radius:5px"></div>
<div class="a" style="left:150px;top:1008px;width:1770px;height:50px;background:#2c2c2c"></div>
<div class="tab" style="left:141px;width:12px"></div>
<div class="tab" style="left:155px"><i style="background:#5b7fa6"></i><em>Blue Sky</em></div>
<div class="tab" style="left:194px"><i style="background:#5a6e3e"></i><em>Foliage</em></div>
<div class="tab" style="left:233px"><i style="background:#8080b8"></i><em>Blue Flower</em></div>
<div class="tab" style="left:272px"><i style="background:#5cc0a8"></i><em>Bluish Green</em></div>
<div class="tab" style="left:311px"><i style="background:#e07828"></i><em>Orange</em></div>
<div class="tab" style="left:350px"><i style="background:#4858a8"></i><em>Purplish Blue</em></div>
<div class="tab" style="left:389px"><i style="background:#c85060"></i><em>Moderate Red</em></div>
<div class="tab" style="left:428px"><i style="background:#5a3a78"></i><em>Purple</em></div>
<div class="tab" style="left:467px"><i style="background:#a0b838"></i><em>Yellow Green</em></div>
<div class="tab" style="left:506px"><i style="background:#e8a028"></i><em>Orange Yellow</em></div>
<div class="tab" style="left:545px"><i style="background:#2838a0"></i><em>Blue</em></div>
<div class="tab" style="left:584px"><i style="background:#409840"></i><em>Green</em></div>
<div class="tab" style="left:623px"><i style="background:#b02838"></i><em>Red</em></div>
<div class="tab" style="left:662px"><i style="background:#e8c818"></i><em>Yellow</em></div>
<div class="tab" style="left:701px"><i style="background:#b84890"></i><em>Magenta</em></div>
<div class="tab" style="left:740px"><i style="background:#0088a8"></i><em>Cyan</em></div>
<div class="tab" style="left:779px"><i style="background:#f00"></i><em>100% Red</em></div>
<div class="tab" style="left:818px"><i style="background:#0f0"></i><em>100% Green</em></div>
<div class="tab" style="left:857px"><i style="background:#00f"></i><em>100% Blue</em></div>
<div class="tab" style="left:896px"><i style="background:#0ff"></i><em>100% Cyan</em></div>
<div class="tab" style="left:935px"><i style="background:#f0f"></i><em>100% Magenta</em></div>
<div class="tab" style="left:974px"><i style="background:#ff0"></i><em>100% Yellow</em></div>
<div class="tab" style="left:1013px"><i style="background:#6a3c20"></i><em>2E</em></div>
<div class="tab" style="left:1052px"><i style="background:#c88060"></i><em>2F</em></div>
<div class="tab" style="left:1091px"><i style="background:#f8b890"></i><em>2K</em></div>
<div class="tab" style="left:1130px"><i style="background:#f8c0a0"></i><em>5D</em></div>
<div class="tab" style="left:1169px"><i style="background:#f0a070"></i><em>7E</em></div>
<div class="tab" style="left:1208px"><i style="background:#c88850"></i><em>7F</em></div>
<div class="tab" style="left:1247px"><i style="background:#8a5830"></i><em>7G</em></div>
<div class="tab" style="left:1286px"><i style="background:#d89070"></i><em>7H</em></div>
<div class="tab" style="left:1325px"><i style="background:#a05828"></i><em>7I</em></div>
<div class="tab" style="left:1364px"><i style="background:#d08060"></i><em>7J</em></div>
<div class="tab" style="left:1403px"><i style="background:#d88868"></i><em>8D</em></div>
<div class="tab" style="left:1442px"><i style="background:#f89870"></i><em>8E</em></div>
<div class="tab" style="left:1481px"><i style="background:#d89070"></i><em>8F</em></div>
<div class="tab" style="left:1520px"><i style="background:#d89068"></i><em>8G</em></div>
<div class="tab" style="left:1559px"><i style="background:#d89068"></i><em>8H</em></div>
<div class="tab" style="left:1598px"><i style="background:#905028"></i><em>8I</em></div>
<div class="tab" style="left:1637px;width:20px"><i style="background:#e09060;width:12px"></i></div>
<div class="a" style="left:150px;top:1049px;width:1510px;height:9px;background:#555"></div>
<div class="a" style="left:350px;top:1050px;width:1150px;height:7px;background:#444;border-radius:3px"></div>
<div class="a" style="left:1640px;top:996px;font-size:26px;font-weight:bold;color:rgba(170,170,170,.55);letter-spacing:-1px">NOTEBOOKCHECK</div>
<div class="a" style="left:1714px;top:1028px;width:110px;height:30px;background:linear-gradient(#6a6a6a,#4a4a4a);border:1px solid #333;font-size:18px;line-height:30px;color:#ddd;padding-left:10px">« &nbsp;Back</div>
<div class="a" style="left:1826px;top:1028px;width:94px;height:30px;background:linear-gradient(#6a6a6a,#4a4a4a);border:1px solid #333;font-size:18px;line-height:30px;color:#ddd;padding-left:12px">Next &nbsp;»</div>
</body></html>
